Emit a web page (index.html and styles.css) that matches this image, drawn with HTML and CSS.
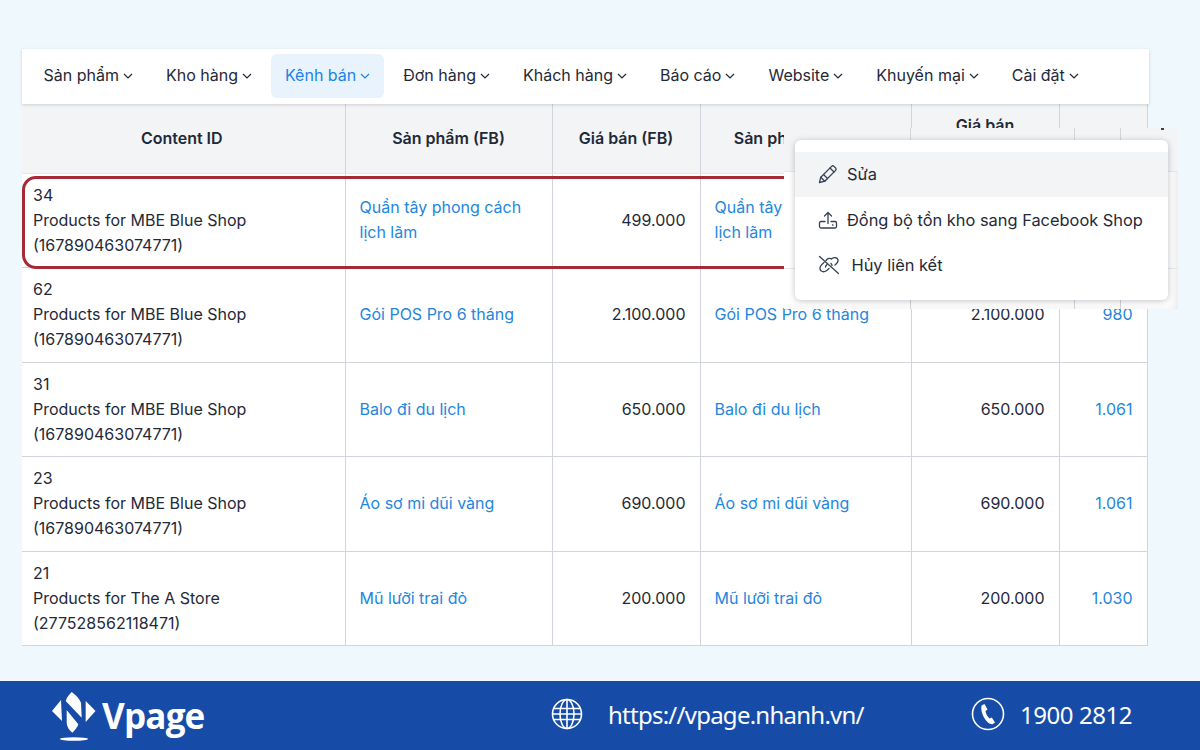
FILE: index.html
```html
<!DOCTYPE html>
<html>
<head>
  <meta charset="utf-8">
  <title>Vpage - Kênh bán</title>
  <link rel="stylesheet" href="styles.css">
</head>
<body>
  <main class="stage">
    <div class="panel">
      <nav class="topnav">
        <a class="nav-item">Sản phẩm <svg class="caret" viewBox="0 0 10 6"><path d="M1 1l4 4 4-4"/></svg></a>
        <a class="nav-item">Kho hàng <svg class="caret" viewBox="0 0 10 6"><path d="M1 1l4 4 4-4"/></svg></a>
        <a class="nav-item active">Kênh bán <svg class="caret" viewBox="0 0 10 6"><path d="M1 1l4 4 4-4"/></svg></a>
        <a class="nav-item">Đơn hàng <svg class="caret" viewBox="0 0 10 6"><path d="M1 1l4 4 4-4"/></svg></a>
        <a class="nav-item">Khách hàng <svg class="caret" viewBox="0 0 10 6"><path d="M1 1l4 4 4-4"/></svg></a>
        <a class="nav-item">Báo cáo <svg class="caret" viewBox="0 0 10 6"><path d="M1 1l4 4 4-4"/></svg></a>
        <a class="nav-item">Website <svg class="caret" viewBox="0 0 10 6"><path d="M1 1l4 4 4-4"/></svg></a>
        <a class="nav-item">Khuyến mại <svg class="caret" viewBox="0 0 10 6"><path d="M1 1l4 4 4-4"/></svg></a>
        <a class="nav-item">Cài đặt <svg class="caret" viewBox="0 0 10 6"><path d="M1 1l4 4 4-4"/></svg></a>
      </nav>

      <table class="products">
        <colgroup>
          <col class="c1"><col class="c2"><col class="c3"><col class="c4"><col class="c5"><col class="c6">
        </colgroup>
        <thead>
          <tr>
            <th class="first">Content ID</th>
            <th>Sản phẩm (FB)</th>
            <th>Giá bán (FB)</th>
            <th>Sản phẩm (Nhanh)</th>
            <th>Giá bán<br>(Nhanh)</th>
            <th></th>
          </tr>
        </thead>
        <tbody>
          <tr>
            <td>34<br>Products for MBE Blue Shop<br>(167890463074771)</td>
            <td><a>Quần tây phong cách lịch lãm</a></td>
            <td class="num">499.000</td>
            <td><a>Quần tây phong cách lịch lãm</a></td>
            <td class="num"></td>
            <td class="num"></td>
          </tr>
          <tr>
            <td>62<br>Products for MBE Blue Shop<br>(167890463074771)</td>
            <td><a>Gói POS Pro 6 tháng</a></td>
            <td class="num">2.100.000</td>
            <td><a>Gói POS Pro 6 tháng</a></td>
            <td class="num">2.100.000</td>
            <td class="num"><a>980</a></td>
          </tr>
          <tr>
            <td>31<br>Products for MBE Blue Shop<br>(167890463074771)</td>
            <td><a>Balo đi du lịch</a></td>
            <td class="num">650.000</td>
            <td><a>Balo đi du lịch</a></td>
            <td class="num">650.000</td>
            <td class="num"><a>1.061</a></td>
          </tr>
          <tr>
            <td>23<br>Products for MBE Blue Shop<br>(167890463074771)</td>
            <td><a>Áo sơ mi dũi vàng</a></td>
            <td class="num">690.000</td>
            <td><a>Áo sơ mi dũi vàng</a></td>
            <td class="num">690.000</td>
            <td class="num"><a>1.061</a></td>
          </tr>
          <tr>
            <td>21<br>Products for The A Store<br>(277528562118471)</td>
            <td><a>Mũ lưỡi trai đỏ</a></td>
            <td class="num">200.000</td>
            <td><a>Mũ lưỡi trai đỏ</a></td>
            <td class="num">200.000</td>
            <td class="num"><a>1.030</a></td>
          </tr>
        </tbody>
      </table>
    </div>

    <!-- red frame around the first row -->
    <div class="row-mark"></div>

    <!-- pasted crop behind the menu -->
    <div class="menu-backdrop">
      <span class="bd-cell head"></span><span class="bd-cell head"></span><span class="bd-cell head"></span><span class="bd-cell head last"></span>
      <span class="bd-cell"></span><span class="bd-cell"></span><span class="bd-cell"></span><span class="bd-cell last"></span>
      <span class="bd-cell foot"></span><span class="bd-cell foot"></span><span class="bd-cell foot"></span><span class="bd-cell foot last"></span>
    </div>

    <ul class="menu">
      <li class="menu-item hover">
        <svg class="menu-icon" viewBox="0 0 20 20"><path d="M1.500 18.500l1.300-5.300L13.600 2.400a1.700 1.700 0 0 1 2.400 0l1.600 1.600a1.700 1.700 0 0 1 0 2.400L6.800 17.200z"/><path d="M12 4l4 4M5.500 10.500l4 4M2.800 13.200l4 4"/></svg>
        <span>Sửa</span>
      </li>
      <li class="menu-item">
        <svg class="menu-icon" viewBox="0 0 20 20"><path d="M10 13.500V2.500M6.500 6L10 2.500 13.500 6"/><path d="M7 11.500H3a1.500 1.500 0 0 0-1.500 1.500v3.500A1.500 1.500 0 0 0 3 18h14a1.500 1.500 0 0 0 1.500-1.500V13a1.500 1.500 0 0 0-1.500-1.500h-4"/><path d="M14.500 15h.5"/></svg>
        <span>Đồng bộ tồn kho sang Facebook Shop</span>
      </li>
      <li class="menu-item">
        <svg class="menu-icon wide" viewBox="0 0 22 20"><path d="M1.500 1.500l19 17"/><path d="M8 5.500c1.600-2.200 4-2.800 5.600-1.500M14 3.500c2.500-1.500 5.500-1 6 1.500.4 2-1 3.500-3 5"/><path d="M6 7.500c-2.500 2-4.500 4-4 6.500.5 2.500 3.500 3.500 6 2 1-.6 2-1.500 3-2.500"/><path d="M9 9.500c-1 1-1.500 1.500-1.500 2.500M13 8.500c.5.5 1 1 1 2"/></svg>
        <span>Hủy liên kết</span>
      </li>
    </ul>
  </main>

  <footer class="footer">
    <div class="brand">
      <svg class="brand-mark" viewBox="0 0 44 50">
        <path class="fill" d="M0 20L9 9l1 21z"/>
        <path class="fill" d="M33.700 10L43.500 20 33.700 31z"/>
        <path class="fill" d="M13.700 10C15 6 17 3.500 19.700 1 24 4 27.500 8 29 11.700l.7 15z"/>
        <path class="fill" d="M14.700 19L26.300 33.300c-1.200 3.400-3.200 6-6 8.400-3.300-3-5.600-6-5.600-10z"/>
        <ellipse class="fill" cx="22" cy="48" rx="14" ry="1.700"/>
      </svg>
      <span class="brand-name">Vpage</span>
    </div>
    <div class="contact site">
      <svg class="contact-icon" viewBox="0 0 32 32"><circle cx="16" cy="16" r="14.500"/><ellipse cx="16" cy="16" rx="7" ry="14.500"/><path d="M16 1.500v29M2.500 10.500h27M1.500 16h29M2.500 21.500h27"/></svg>
      <span class="contact-text url">https://vpage.nhanh.vn/</span>
    </div>
    <div class="contact phone">
      <svg class="contact-icon" viewBox="0 0 34 34"><circle cx="17" cy="17" r="15.500"/><path class="fill" d="M10.500 8.500l3-1.500 3 5.500-2 1.500c.2 2.500 2 6 4.300 7.500l2-1 3.200 5-2.500 1.700C16.500 28 9 17 10.500 8.500z"/></svg>
      <span class="contact-text tel">1900 2812</span>
    </div>
  </footer>
</body>
</html>
```

FILE: styles.css
```css
* {
  box-sizing: border-box;
}
html, body {
  margin: 0;
  height: 750px;
  overflow: hidden;
}
body {
  display: flex;
  flex-direction: column;
  background-color: #eef8fd;
  font-family: Inter, "Noto Sans", sans-serif;
  font-size: 16px;
  color: #1f2937;
}
.stage {
  position: relative;
  height: 681px;
  padding: 49px 51px 0 22px;
}

/* top navigation */
.panel {
  width: 1127px;
}
.topnav {
  position: relative;
  display: flex;
  align-items: flex-start;
  height: 55px;
  padding: 5px 0 0 8px;
  background-color: #fff;
  box-shadow: 0 1px 3px rgba(31, 41, 55, 0.18);
}
.nav-item {
  display: flex;
  align-items: center;
  gap: 4px;
  height: 44px;
  padding: 0 13.500px 2px;
  margin-right: 6px;
  border-radius: 6px;
  font-size: 16px;
  white-space: nowrap;
}
.nav-item.active {
  background-color: #e8f3fd;
  color: #1b84e6;
}
.caret {
  width: 10px;
  height: 6px;
  margin-top: 2px;
  fill: none;
  stroke: currentColor;
  stroke-width: 1.200;
}

/* table */
.products {
  width: 1125px;
  table-layout: fixed;
  border-collapse: collapse;
  font-size: 16px;
  line-height: 25px;
}
.c1 { width: 323px; }
.c2 { width: 207px; }
.c3 { width: 148px; }
.c4 { width: 211px; }
.c5 { width: 148px; }
.c6 { width: 88px; }
.products th {
  height: 69px;
  background-color: #f3f4f6;
  font-weight: 600;
  border-right: 1px solid #d1d5db;
  border-bottom: 1px solid #e5e7eb;
}
.products th.first {
  padding-right: 4px;
}
.products td {
  height: 94.500px;
  padding: 0 14px;
  background-color: #fff;
  border-right: 1px solid #d1d5db;
  border-bottom: 1px solid #d1d5db;
}
.products td:first-child {
  padding-left: 11px;
}
.products td.num {
  text-align: right;
}
.products a {
  color: #2486dc;
}

/* overlays */
.row-mark {
  position: absolute;
  left: 22px;
  top: 176px;
  width: 900px;
  height: 93px;
  border: 3px solid #a52a35;
  border-radius: 14px;
}
.menu-backdrop {
  position: absolute;
  left: 784px;
  top: 128px;
  width: 394px;
  height: 181px;
  display: grid;
  grid-template-columns: 127px 164px 46px 57px;
  grid-template-rows: 44px 97px 40px;
  background-color: #fff;
  box-shadow: inset -8px -4px 8px -6px rgba(31, 41, 55, 0.12);
}
.menu-backdrop::after {
  content: "";
  position: absolute;
  left: 377px;
  top: 0;
  width: 3px;
  height: 2px;
  background-color: #374151;
}
.bd-cell {
  border-right: 1px solid #d1d5db;
  border-bottom: 1px solid #e5e7eb;
}
.bd-cell.head {
  background-color: #f3f4f6;
}
.bd-cell.foot {
  border-bottom: 0;
}
.bd-cell.last {
  border-right: 0;
}
.menu {
  position: absolute;
  left: 795px;
  top: 140px;
  width: 373px;
  height: 160px;
  margin: 0;
  padding: 12px 0 0;
  list-style: none;
  background-color: #fff;
  border-radius: 6px;
  box-shadow: 0 1px 6px rgba(31, 41, 55, 0.28);
}
.menu-item {
  display: flex;
  align-items: center;
  gap: 9px;
  height: 45.500px;
  padding-left: 23px;
  font-size: 16.400px;
  white-space: nowrap;
}
.menu-item.hover {
  height: 45px;
  padding-bottom: 1px;
  background-color: #f3f4f6;
}
.menu-icon {
  flex: none;
  width: 20px;
  height: 20px;
  fill: none;
  stroke: #374151;
  stroke-width: 1.300;
  stroke-linecap: round;
  stroke-linejoin: round;
}
.menu-icon.wide {
  width: 22px;
  margin-right: 2.500px;
}

/* footer */
.footer {
  display: flex;
  align-items: center;
  height: 69px;
  padding-left: 52px;
  background-color: #164ca8;
  color: #fff;
}
.brand {
  display: flex;
  align-items: center;
  gap: 6px;
  width: 499px;
}
.brand-mark {
  width: 44px;
  height: 50px;
}
.fill {
  fill: #fff;
  stroke: none;
}
.brand-name {
  font-family: "Open Sans", sans-serif;
  font-size: 35px;
  font-weight: 700;
  letter-spacing: -0.800px;
}
.contact {
  display: flex;
  align-items: center;
  padding-bottom: 3px;
}
.site {
  gap: 25px;
  width: 420px;
}
.phone {
  gap: 15px;
}
.contact-icon {
  flex: none;
  width: 32px;
  height: 32px;
  fill: none;
  stroke: #fff;
  stroke-width: 1.600;
}
.phone .contact-icon {
  width: 34px;
  height: 34px;
}
.contact-text {
  font-family: "Noto Sans", sans-serif;
  font-size: 24px;
}
.url {
  letter-spacing: -0.750px;
}
.tel {
  letter-spacing: -0.450px;
}
```
